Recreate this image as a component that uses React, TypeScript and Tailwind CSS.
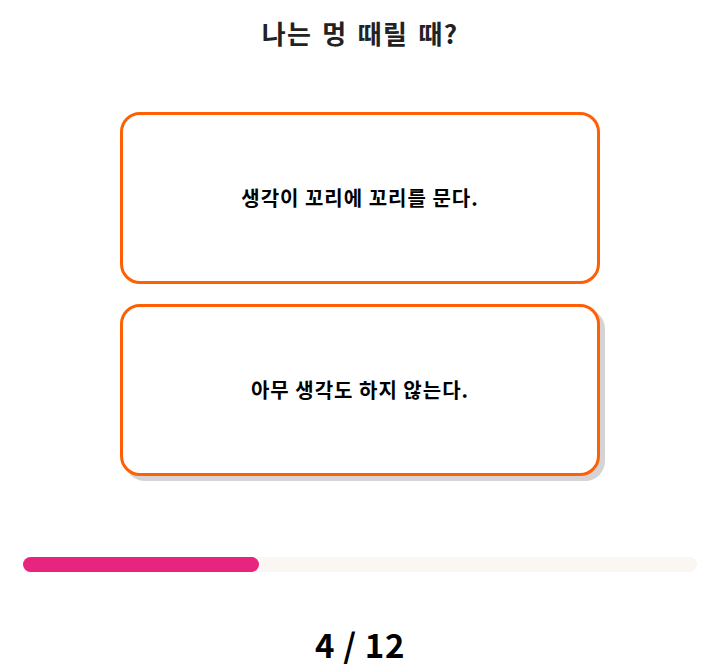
const font = { fontFamily: '"Noto Sans CJK KR", "Noto Sans", sans-serif' };

function Choice({ text, active }: { text: string; active?: boolean }) {
  return (
    <button
      className={
        active
          ? "w-[480px] h-[172px] rounded-[20px] border-[3px] border-[#ff5f05] bg-white flex items-center justify-center text-[20px] tracking-[0.05em] font-bold text-black shadow-[5px_5px_0_#d4d4d4]"
          : "w-[480px] h-[172px] rounded-[20px] border-[3px] border-[#ff5f05] bg-white flex items-center justify-center text-[20px] tracking-[0.05em] font-bold text-black"
      }
    >
      {text}
    </button>
  );
}

export default function App() {
  const current = 4;
  const total = 12;

  return (
    <div className="w-full min-h-screen bg-white flex flex-col items-center pr-[5px]" style={font}>
      <h1 className="pt-[17px] text-[26px] leading-8 font-bold text-[#222] tracking-[0.05em] [word-spacing:3px]">
        나는 멍 때릴 때?
      </h1>

      <div className="mt-[63px] flex flex-col gap-5">
        <Choice text="생각이 꼬리에 꼬리를 문다." />
        <Choice text="아무 생각도 하지 않는다." active />
      </div>

      <div className="mt-[81px] w-[674px] h-[15px] rounded-full bg-[#faf6f2]">
        <div className="h-full w-[236px] rounded-full bg-[#e8247f]" />
      </div>

      <p className="mt-[52px] text-[33px] leading-10 font-bold text-black tracking-[0.02em]">
        {current} / {total}
      </p>
    </div>
  );
}
